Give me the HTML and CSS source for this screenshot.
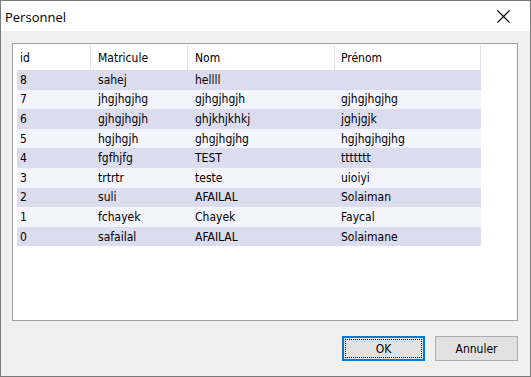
FILE: index.html
```html
<!DOCTYPE html>
<html lang="fr">
<head>
    <meta charset="UTF-8">
    <title>Personnel</title>
    <link rel="stylesheet" href="styles.css">
</head>
<body>
    <div class="window">
        <div class="titlebar">
            <span class="title">Personnel</span>
            <svg class="close" width="13" height="13" viewBox="0 0 13 13">
                <path d="M0.5 0.5 L12.5 12.5 M12.5 0.5 L0.5 12.5" stroke="#000" stroke-width="1.1" fill="none"/>
            </svg>
        </div>
        <div class="content">
            <div class="listbox">
                <div class="row header">
                    <div class="cell c1">id</div>
                    <div class="cell c2">Matricule</div>
                    <div class="cell c3">Nom</div>
                    <div class="cell c4">Prénom</div>
                </div>
                <div class="row odd"><div class="cell c1">8</div><div class="cell c2">sahej</div><div class="cell c3">hellll</div><div class="cell c4"></div></div>
                <div class="row even"><div class="cell c1">7</div><div class="cell c2">jhgjhgjhg</div><div class="cell c3">gjhgjhgjh</div><div class="cell c4">gjhgjhgjhg</div></div>
                <div class="row odd"><div class="cell c1">6</div><div class="cell c2">gjhgjhgjh</div><div class="cell c3">ghjkhjkhkj</div><div class="cell c4">jghjgjk</div></div>
                <div class="row even"><div class="cell c1">5</div><div class="cell c2">hgjhgjh</div><div class="cell c3">ghgjhgjhg</div><div class="cell c4">hgjhgjhgjhg</div></div>
                <div class="row odd"><div class="cell c1">4</div><div class="cell c2">fgfhjfg</div><div class="cell c3">TEST</div><div class="cell c4">ttttttt</div></div>
                <div class="row even"><div class="cell c1">3</div><div class="cell c2">trtrtr</div><div class="cell c3">teste</div><div class="cell c4">uioiyi</div></div>
                <div class="row odd"><div class="cell c1">2</div><div class="cell c2">suli</div><div class="cell c3">AFAILAL</div><div class="cell c4">Solaiman</div></div>
                <div class="row even"><div class="cell c1">1</div><div class="cell c2">fchayek</div><div class="cell c3">Chayek</div><div class="cell c4">Faycal</div></div>
                <div class="row odd"><div class="cell c1">0</div><div class="cell c2">safailal</div><div class="cell c3">AFAILAL</div><div class="cell c4">Solaimane</div></div>
            </div>
            <div class="buttons">
                <button class="btn default"><span class="focus">OK</span></button>
                <button class="btn">Annuler</button>
            </div>
        </div>
    </div>
</body>
</html>
```

FILE: styles.css
```css
html, body {
    margin: 0;
    padding: 0;
    background: #ffffff;
}
.window {
    width: 531px;
    height: 377px;
    box-sizing: border-box;
    border: 1px solid #7a7a7a;
    background: #f0f0f0;
    display: flex;
    flex-direction: column;
}
.titlebar {
    height: 30px;
    background: #ffffff;
    display: flex;
    align-items: center;
    justify-content: space-between;
    padding: 0 20px 0 4px;
    flex-shrink: 0;
}
.title {
    font-family: "Open Sans", "Noto Sans", sans-serif;
    font-size: 13px;
    color: #000;
    margin-top: 1px;
}
.close {
    display: block;
}
.content {
    flex: 1;
    padding: 12px 12px 15px 11px;
    display: flex;
    flex-direction: column;
}
.listbox {
    height: 278px;
    box-sizing: border-box;
    background: #ffffff;
    border: 1px solid #a0a0a0;
    padding: 1px 0 0 4px;
    font-family: "DejaVu Sans Condensed", "DejaVu Sans", sans-serif;
    font-size: 12px;
    color: #000;
}
.row {
    display: flex;
    height: 19.6px;
    align-items: center;
}
.row.header {
    height: 25px;
    background: #ffffff;
}
.row.odd {
    background: #dcdcef;
    width: 464px;
}
.row.even {
    background: #f4f4fc;
    width: 464px;
}
.cell {
    box-sizing: border-box;
    white-space: nowrap;
    height: 100%;
    display: flex;
    align-items: center;
}
.c1 { width: 74px; padding-left: 3px; }
.c2 { width: 97px; padding-left: 7px; }
.c3 { width: 147px; padding-left: 7px; }
.c4 { width: 146px; padding-left: 6px; }
.header .cell {
    border-right: 1px solid #e5e5e5;
}
.buttons {
    margin-top: 15px;
    display: flex;
    justify-content: flex-end;
    gap: 10px;
}
.btn {
    width: 83px;
    height: 25px;
    box-sizing: border-box;
    background: #e1e1e1;
    border: 1px solid #adadad;
    font-family: "DejaVu Sans Condensed", "DejaVu Sans", sans-serif;
    font-size: 12px;
    color: #000;
    padding: 0;
    margin: 0;
}
.btn.default {
    border: 2px solid #0078d7;
    padding: 1px;
}
.focus {
    display: flex;
    align-items: center;
    justify-content: center;
    height: 100%;
    border: 1px dotted #000;
    box-sizing: border-box;
}
```
